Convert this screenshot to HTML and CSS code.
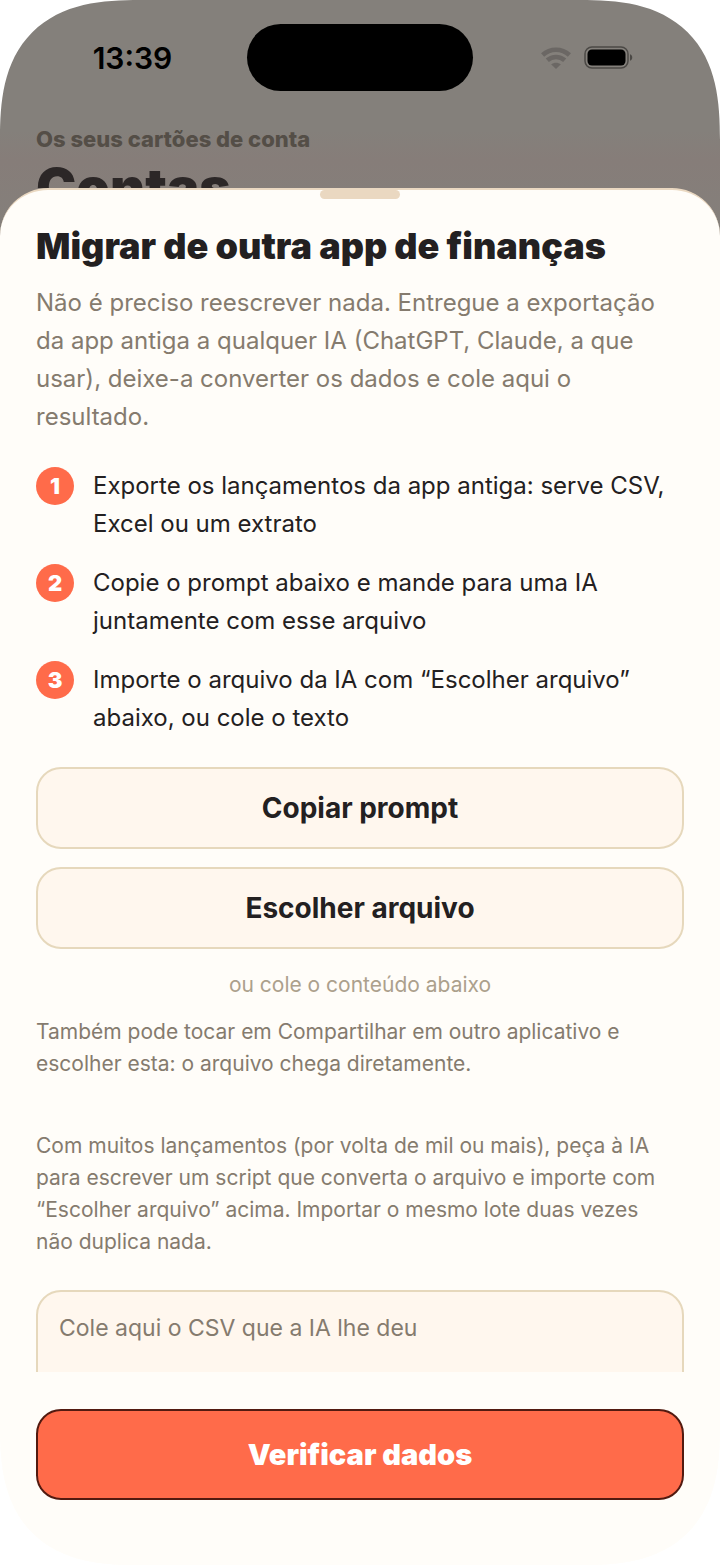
FILE: index.html
```html
<!DOCTYPE html>
<html lang="pt">
  <head>
    <meta charset="UTF-8" />
    <meta name="viewport" content="width=device-width, initial-scale=1.0" />
    <title>Migrar de outra app de finanças</title>
    <link rel="stylesheet" href="styles.css">
  </head>
  <body>
    <div class="phone">
      <header class="backdrop">
        <div class="status-bar">
          <time class="clock">13:39</time>
          <div class="island"></div>
          <div class="status-icons">
            <svg class="wifi" viewBox="0 0 30 22" aria-hidden="true">
              <g fill="none" stroke="#6b6764" stroke-width="4.6">
                <path d="M1.6 8C9.2 .9 20.8 .9 28.4 8" />
                <path d="M6.300 13.300c4.900-4.500 12.500-4.500 17.400 0" />
              </g>
              <path fill="#6b6764" d="M15 22l-4.900-4.700c2.800-2.200 7-2.200 9.800 0z" />
            </svg>
            <svg class="battery" viewBox="0 0 49 23" aria-hidden="true">
              <rect x="1" y="1" width="43" height="21" rx="7" fill="none" stroke="#4b4845" stroke-width="1.5" />
              <rect x="3.5" y="3.5" width="38" height="16" rx="4.5" />
              <path fill="#4b4845" d="M46 8.200c3 .9 3 5.700 0 6.600z" />
            </svg>
          </div>
        </div>
        <div class="page-head">
          <p class="eyebrow">Os seus cartões de conta</p>
          <h1 class="page-title">Contas</h1>
        </div>
      </header>

      <main class="sheet">
        <div class="grabber"></div>
        <div class="sheet-body">
          <h2 class="sheet-title">Migrar de outra app de finanças</h2>
          <p class="intro">Não é preciso reescrever nada. Entregue a exportação da app antiga a qualquer IA (ChatGPT, Claude, a que usar), deixe-a converter os dados e cole aqui o resultado.</p>

          <ol class="steps">
            <li><span class="num">1</span><p>Exporte os lançamentos da app antiga: serve CSV, Excel ou um extrato</p></li>
            <li><span class="num">2</span><p>Copie o prompt abaixo e mande para uma IA juntamente com esse arquivo</p></li>
            <li><span class="num">3</span><p>Importe o arquivo da IA com “Escolher arquivo” abaixo, ou cole o texto</p></li>
          </ol>

          <div class="actions">
            <button class="btn" type="button">Copiar prompt</button>
            <button class="btn" type="button">Escolher arquivo</button>
          </div>

          <p class="divider">ou cole o conteúdo abaixo</p>
          <p class="note">Também pode tocar em Compartilhar em outro aplicativo e escolher esta: o arquivo chega diretamente.</p>
          <p class="note">Com muitos lançamentos (por volta de mil ou mais), peça à IA para escrever um script que converta o arquivo e importe com “Escolher arquivo” acima. Importar o mesmo lote duas vezes <br>não duplica nada.</p>
          <textarea class="paste" aria-label="Conteúdo CSV" placeholder="Cole aqui o CSV que a IA lhe deu"></textarea>
        </div>
        <footer class="sheet-footer">
          <button class="btn btn-primary" type="button">Verificar dados</button>
        </footer>
      </main>
    </div>
  </body>
</html>
```
FILE: styles.css
```css
* {
  margin: 0;
  padding: 0;
  box-sizing: border-box;
}

body {
  background: #fff;
  color: #232021;
  font-family: Inter, "Liberation Sans", sans-serif;
}

.phone {
  display: flex;
  flex-direction: column;
  height: 100vh;
  overflow: hidden;
  border-radius: 120px;
  background: linear-gradient(#84807b 0, #84807b 130px, #867d79 160px, #84807b 240px, #fffdf9 300px);
}
@supports (corner-shape: squircle) {
  .phone {
    border-radius: 140px;
    corner-shape: superellipse(1.4);
  }
}

/* dimmed screen behind the sheet */
.backdrop {
  height: 188px;
  flex: none;
  overflow: hidden;
}
.status-bar {
  display: grid;
  grid-template-columns: 1fr 226px 1fr;
  align-items: center;
  padding-top: 24px;
}
.clock {
  padding-left: 18px;
  color: #000;
  text-align: center;
  font-size: 30px;
  font-weight: 600;
}
.island {
  height: 67px;
  border-radius: 34px;
  background: #000;
}
.status-icons {
  display: flex;
  justify-content: center;
  align-items: center;
  gap: 13px;
  padding-right: 20px;
}
.wifi {
  width: 30px;
  height: 22px;
}
.battery {
  width: 49px;
  height: 23px;
}
.page-head {
  padding: 34px 36px 0;
}
.eyebrow {
  color: #544e47;
  font-size: 22px;
  font-weight: 800;
  line-height: 28px;
}
.page-title {
  padding-top: 3px;
  color: #2c2727;
  font-size: 54px;
  font-weight: 900;
  line-height: 64px;
}

.sheet {
  flex: 1;
  min-height: 0;
  display: flex;
  flex-direction: column;
  border-top: 2px solid #ead8c1;
  border-radius: 48px 48px 0 0;
  background: #fffdf9;
}
.grabber {
  width: 80px;
  height: 9px;
  flex: none;
  align-self: center;
  border-radius: 5px;
  background: #ead8c1;
}
.sheet-body {
  flex: 1;
  min-height: 0;
  overflow: hidden;
  padding: 24px 36px 0;
}
.sheet-title {
  margin-bottom: 15px;
  font-size: 36px;
  font-weight: 900;
  line-height: 46px;
}
.intro {
  color: #857b6e;
  font-size: 24px;
  line-height: 38px;
}
.steps {
  display: flex;
  flex-direction: column;
  gap: 21px;
  margin: 31px 0 30px;
  list-style: none;
  font-size: 24px;
  line-height: 38px;
}
.steps li {
  display: flex;
  gap: 19px;
}
.num {
  width: 38px;
  height: 38px;
  flex: none;
  border-radius: 50%;
  background: #ff6b4a;
  color: #fff;
  text-align: center;
  font-size: 22px;
  font-weight: 900;
}

.actions {
  display: flex;
  flex-direction: column;
  gap: 18px;
}
.btn {
  width: 100%;
  height: 82px;
  border: 2px solid #e6d8bc;
  border-radius: 25px;
  background: #fff7ee;
  color: #232021;
  font-family: inherit;
  font-size: 28px;
  font-weight: 700;
}
.divider {
  margin: 20px 0 15px;
  color: #aca08c;
  text-align: center;
  font-size: 21px;
  line-height: 32px;
}
.note {
  margin-bottom: 50px;
  color: #857b6e;
  font-size: 21px;
  line-height: 32px;
}
.note:last-of-type {
  margin-bottom: 32px;
}
.paste {
  display: block;
  width: 100%;
  height: 240px;
  padding: 20px 21px;
  border: 2px solid #e6d8bc;
  border-radius: 25px;
  background: #fff7ee;
  color: #232021;
  font-family: inherit;
  font-size: 23px;
  line-height: 32px;
  resize: none;
}
.paste::placeholder {
  color: #857b6e;
}

.sheet-footer {
  padding: 37px 36px 65px;
}
.btn-primary {
  height: 91px;
  border-color: #521a10;
  background: #ff6b4a;
  color: #fff;
  font-size: 29px;
  font-weight: 900;
}
```
